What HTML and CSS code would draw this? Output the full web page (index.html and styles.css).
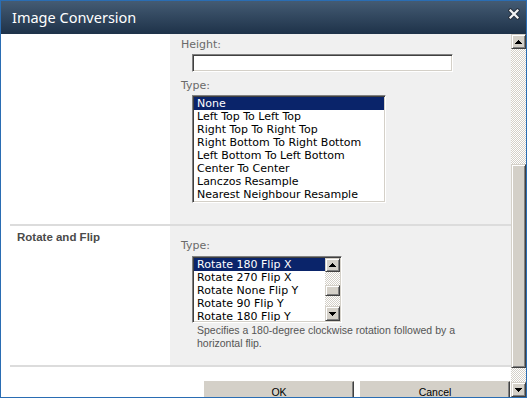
FILE: index.html
```html
<!DOCTYPE html>
<html>
<head>
<meta charset="utf-8">
<link rel="stylesheet" href="styles.css">
</head>
<body>
<div class="window">
  <div class="titlebar">
    <span class="title">Image Conversion</span>
    <svg class="close" width="12" height="12" viewBox="0 0 12 12">
      <path d="M2.5 2.5L9.5 9.5M9.5 2.5L2.5 9.5" stroke="#28323f" stroke-width="4.2" stroke-linecap="square"/>
      <path d="M2.5 2.5L9.5 9.5M9.5 2.5L2.5 9.5" stroke="#f4f4f4" stroke-width="2.2" stroke-linecap="square"/>
    </svg>
  </div>
  <div class="body">
    <div class="viewport">
      <div class="section s1">
        <div class="sec-left"></div>
        <div class="sec-right">
          <div class="label">Height:</div>
          <div class="textbox"></div>
          <div class="label label-gap">Type:</div>
          <div class="listbox lb1">
            <div class="opt sel">None</div>
            <div class="opt">Left Top To Left Top</div>
            <div class="opt">Right Top To Right Top</div>
            <div class="opt">Right Bottom To Right Bottom</div>
            <div class="opt">Left Bottom To Left Bottom</div>
            <div class="opt">Center To Center</div>
            <div class="opt">Lanczos Resample</div>
            <div class="opt">Nearest Neighbour Resample</div>
          </div>
        </div>
      </div>
      <div class="section s2">
        <div class="sec-left"><div class="heading">Rotate and Flip</div></div>
        <div class="sec-right">
          <div class="label">Type:</div>
          <div class="listbox lb2">
            <div class="opts">
              <div class="opt sel">Rotate 180 Flip X</div>
              <div class="opt">Rotate 270 Flip X</div>
              <div class="opt">Rotate None Flip Y</div>
              <div class="opt">Rotate 90 Flip Y</div>
              <div class="opt">Rotate 180 Flip Y</div>
            </div>
            <div class="mini-sb">
              <div class="sbtn mini-btn"><svg width="7" height="4" shape-rendering="crispEdges"><path d="M3 0h1v1h-1zM2 1h3v1h-3zM1 2h5v1h-5zM0 3h7v1h-7z"/></svg></div>
              <div class="track mt1"></div>
              <div class="thumb mini-thumb"></div>
              <div class="track mt2"></div>
              <div class="sbtn mini-btn2"><svg width="7" height="4" shape-rendering="crispEdges"><path d="M0 0h7v1h-7zM1 1h5v1h-5zM2 2h3v1h-3zM3 3h1v1h-1z"/></svg></div>
            </div>
          </div>
          <div class="desc">Specifies a 180-degree clockwise rotation followed by a horizontal flip.</div>
        </div>
      </div>
      <div class="buttons">
        <button class="btn">OK</button>
        <button class="btn">Cancel</button>
      </div>
    </div>
    <div class="vscroll">
      <div class="sbtn big-btn"><svg width="7" height="4" shape-rendering="crispEdges"><path d="M3 0h1v1h-1zM2 1h3v1h-3zM1 2h5v1h-5zM0 3h7v1h-7z"/></svg></div>
      <div class="track t1"></div>
      <div class="thumb big-thumb"></div>
      <div class="track t2"></div>
      <div class="sbtn big-btn"><svg width="7" height="4" shape-rendering="crispEdges"><path d="M0 0h7v1h-7zM1 1h5v1h-5zM2 2h3v1h-3zM3 3h1v1h-1z"/></svg></div>
    </div>
  </div>
</div>
</body>
</html>
```
FILE: styles.css
```css
html, body {
  margin: 0;
  padding: 0;
  background: #ffffff;
}
.window {
  width: 527px;
  height: 398px;
  box-sizing: border-box;
  border: 1px solid #2a6db3;
  display: flex;
  flex-direction: column;
  overflow: hidden;
}
.titlebar {
  height: 33px;
  flex: none;
  display: flex;
  justify-content: space-between;
  align-items: flex-start;
  padding: 0 6px 0 11px;
  background: linear-gradient(#445b73, #1e3249);
}
.title {
  margin-top: 6px;
  font-family: "Noto Sans", sans-serif;
  font-size: 14.5px;
  line-height: 20px;
  color: #ffffff;
}
.close {
  margin-top: 7px;
}
.body {
  flex: 1;
  display: flex;
  min-height: 0;
}
.viewport {
  width: 510px;
  flex: none;
  background: #ffffff;
  overflow: hidden;
  display: flex;
  flex-direction: column;
}
.section {
  display: flex;
  margin-left: 9px;
  border-bottom: 2px solid #dcdcdc;
  flex: none;
}
.sec-left {
  width: 160px;
  flex: none;
  box-sizing: border-box;
  padding: 4px 0 0 7px;
}
.sec-right {
  flex: 1;
  background: #f0f0f0;
  padding-left: 11px;
}
.s1 .sec-right {
  padding-top: 4px;
  padding-bottom: 21px;
}
.s2 .sec-right {
  padding-top: 13px;
  padding-bottom: 15px;
}
.heading {
  font-family: "Liberation Sans", Arial, sans-serif;
  font-weight: bold;
  font-size: 11.5px;
  line-height: 14px;
  color: #4a4a4a;
}
.label {
  font-family: "DejaVu Sans", Verdana, sans-serif;
  font-size: 11px;
  line-height: 14px;
  color: #6a6a6a;
  margin-bottom: 2px;
}
.s2 .label {
  margin-bottom: 3px;
}
.label-gap {
  margin-top: 7px;
}
.textbox {
  margin: 1px 0 0 11px;
  width: 261px;
  height: 18px;
  box-sizing: border-box;
  background: #ffffff;
  border: 1px solid;
  border-color: #808080 #ffffff #ffffff #808080;
  box-shadow: inset 1px 1px 0 #404040, inset -1px -1px 0 #d4d0c8;
}
.listbox {
  margin-left: 11px;
  box-sizing: border-box;
  background: #ffffff;
  border: 1px solid;
  border-color: #808080 #ffffff #ffffff #808080;
  padding: 1px;
  position: relative;
}
.listbox::after {
  content: "";
  position: absolute;
  inset: 0;
  box-shadow: inset 1px 1px 0 #404040, inset -1px -1px 0 #d4d0c8;
  pointer-events: none;
}
.lb1 {
  width: 194px;
  height: 108px;
}
.lb2 {
  width: 150px;
  height: 67px;
  display: flex;
  overflow: hidden;
}
.opts {
  flex: 1;
  overflow: hidden;
}
.opt {
  font-family: "DejaVu Sans", Verdana, sans-serif;
  font-size: 11px;
  line-height: 13px;
  height: 13px;
  padding-left: 3px;
  color: #000000;
  white-space: nowrap;
}
.opt.sel {
  background: #0a246a;
  color: #ffffff;
}
.mini-sb {
  width: 15px;
  flex: none;
  display: flex;
  flex-direction: column;
}
.sbtn {
  box-sizing: border-box;
  background: #d4d0c8;
  border: 1px solid;
  border-color: #d4d0c8 #404040 #404040 #d4d0c8;
  box-shadow: inset 1px 1px 0 #ffffff, inset -1px -1px 0 #808080;
  display: flex;
  align-items: center;
  justify-content: center;
  flex: none;
}
.sbtn svg {
  display: block;
}
.thumb {
  box-sizing: border-box;
  background: #d4d0c8;
  border: 1px solid;
  border-color: #d4d0c8 #404040 #404040 #d4d0c8;
  box-shadow: inset 1px 1px 0 #ffffff, inset -1px -1px 0 #808080;
  flex: none;
}
.track {
  background: repeating-conic-gradient(#d4d0c8 0% 25%, #ffffff 0% 50%) 0 0 / 2px 2px;
  flex: none;
}
.mini-btn { height: 14px; }
.mini-btn2 { height: 15px; }
.mt1 { height: 13px; }
.mini-thumb { height: 11px; }
.mt2 { height: 10px; }
.desc {
  margin: 1px 0 0 16px;
  width: 280px;
  font-family: "Liberation Sans", Arial, sans-serif;
  font-size: 10.5px;
  line-height: 13px;
  color: #555555;
}
.buttons {
  flex: 1;
  display: flex;
  justify-content: flex-end;
  gap: 6px;
  padding: 14px 1px 0 0;
  overflow: hidden;
  align-items: flex-start;
}
.btn {
  width: 150px;
  height: 23px;
  flex: none;
  box-sizing: border-box;
  margin: 0;
  padding: 0;
  background: #d4d0c8;
  border: 1px solid;
  border-color: #d4d0c8 #404040 #404040 #d4d0c8;
  box-shadow: inset -1px -1px 0 #808080;
  font-family: "Liberation Sans", Arial, sans-serif;
  font-size: 10.5px;
  line-height: 21px;
  color: #000000;
}
.vscroll {
  width: 15px;
  flex: none;
  display: flex;
  flex-direction: column;
}
.big-btn { height: 15px; }
.t1 { height: 115px; }
.big-thumb { height: 204px; }
.t2 { height: 14px; }
```
